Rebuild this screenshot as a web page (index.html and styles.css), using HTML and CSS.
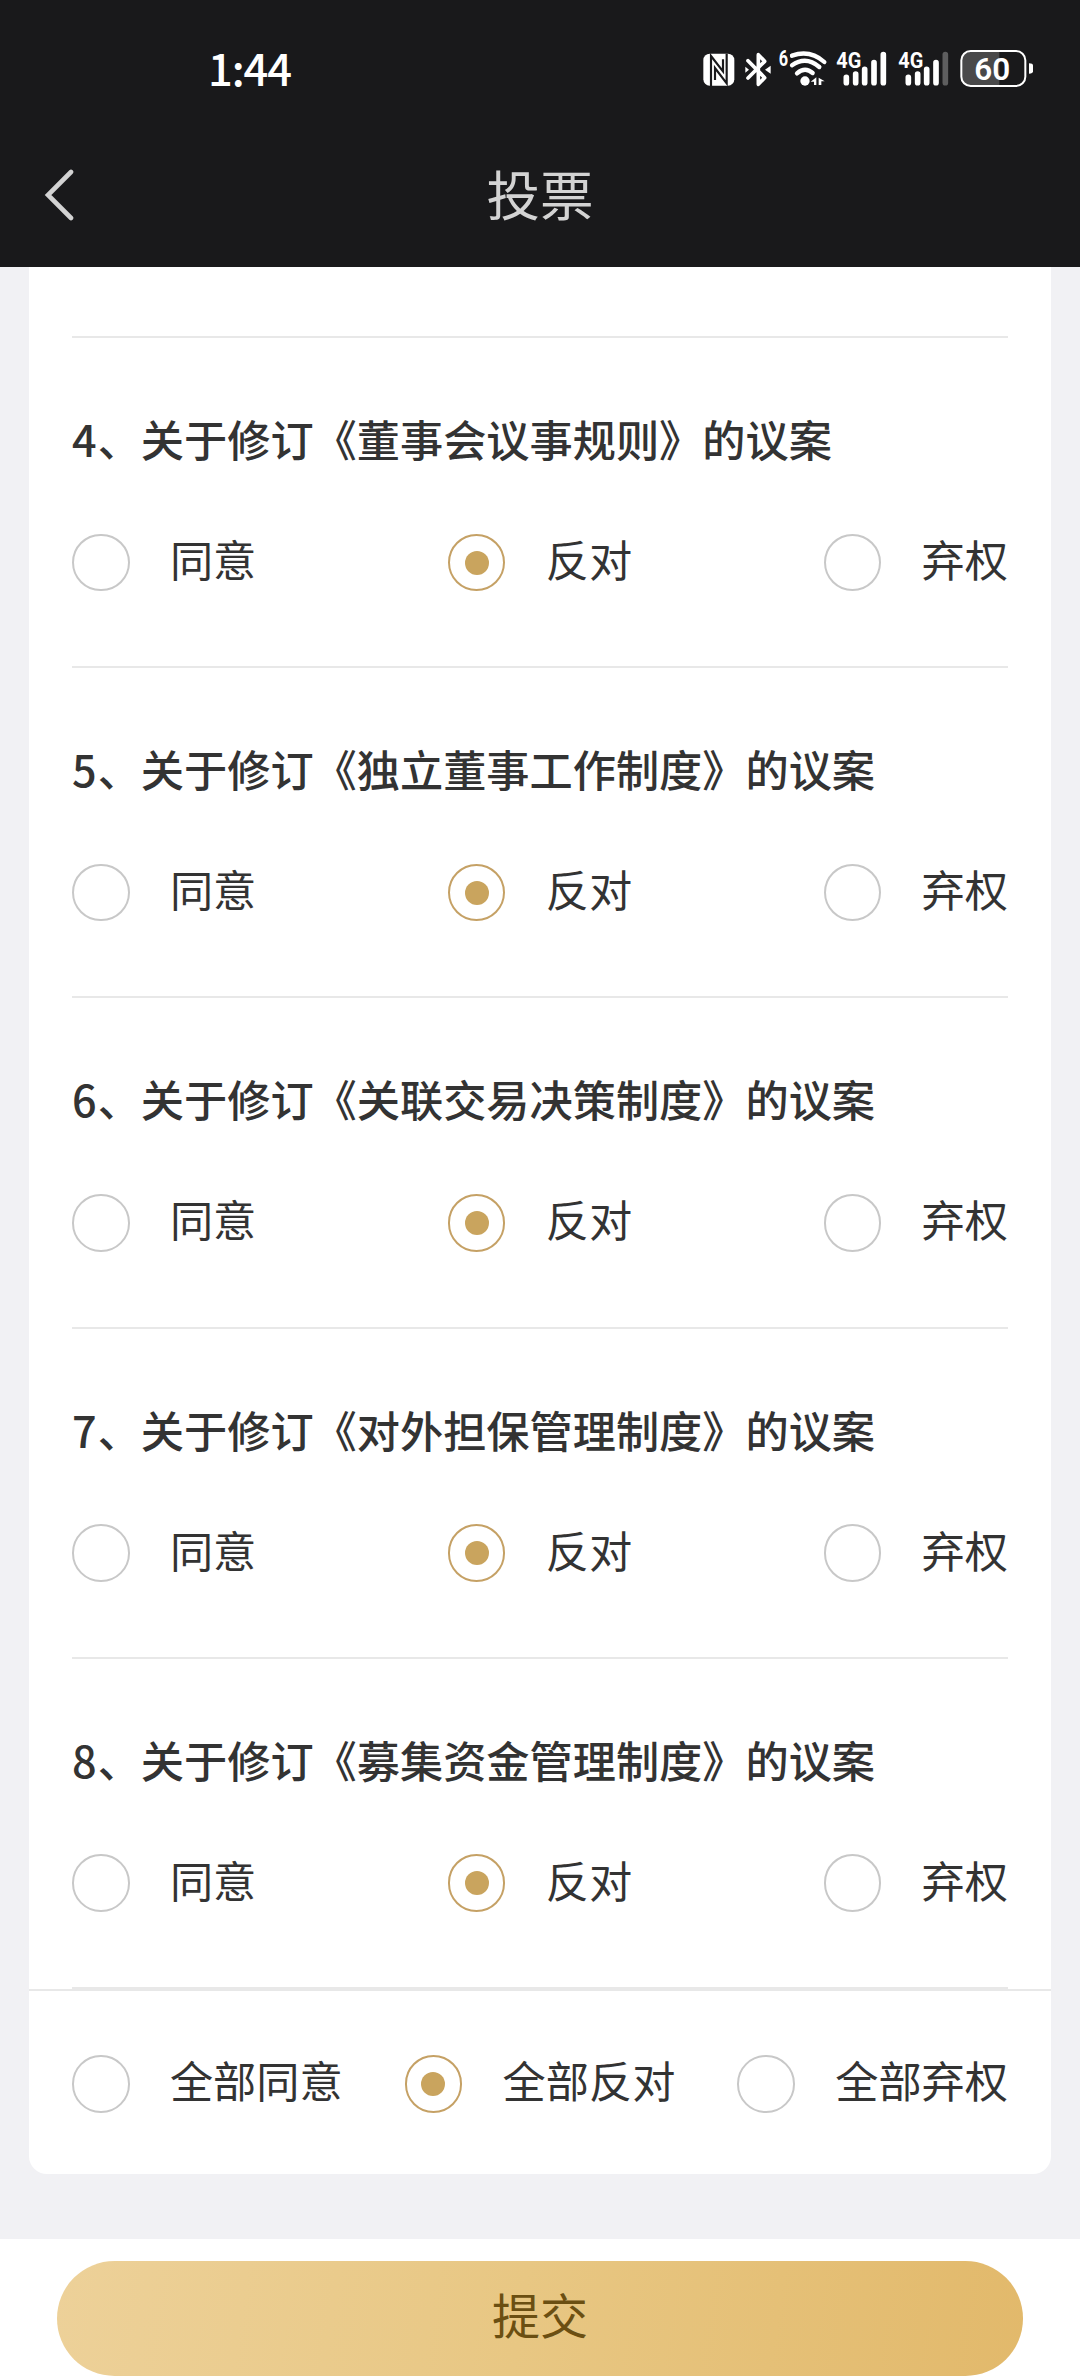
FILE: index.html
```html
<!DOCTYPE html>
<html lang="zh-CN">
<head>
<meta charset="utf-8">
<title>投票</title>
<link rel="stylesheet" href="styles.css">
</head>
<body>
<header class="header">
  <div class="status">
    <span class="clock">1:44</span>
    <div class="indicators">
      <svg class="ind" width="32" height="50" viewBox="38 30 96 150">
        <rect x="39" y="71" width="93" height="96" rx="19" fill="#fff"/>
        <path d="M62 168V78L98 124V88M74 150V114L109 160V71" fill="none" stroke="#19191b" stroke-width="6.5"/>
      </svg>
      <svg class="ind ind-bt" width="26" height="50" viewBox="164 30 78 150">
        <path d="M173 92L223 143L204 163V74L223 94L173 144" fill="none" stroke="#fff" stroke-width="11" stroke-linejoin="round" stroke-linecap="round"/>
        <path d="M224 119L241 107V131ZM165 110L176 119L165 128Z" fill="#fff"/>
      </svg>
      <svg class="ind ind-wifi" width="50" height="50" viewBox="262 30 150 150">
        <text class="tiny" x="264" y="108" textLength="28" lengthAdjust="spacingAndGlyphs" font-size="64">6</text>
        <g fill="none" stroke="#fff" stroke-width="13" stroke-linecap="round">
          <path d="M304 77Q358 58 401 96"/><path d="M304 106Q346 76 386 111"/><path d="M319 130Q343 109 366 129"/>
        </g>
        <circle cx="343" cy="153" r="14" fill="#fff"/>
        <path d="M360 155L377 142V165H370V155ZM384 143L402 154H392V165H384Z" fill="#fff"/>
      </svg>
      <svg class="ind ind-sig" width="51" height="50" viewBox="437 30 153 150">
        <text class="tiny" x="438" y="113" textLength="75" lengthAdjust="spacingAndGlyphs" font-size="64">4G</text>
        <path d="M468 142V158M496 132V158M523 118V158M551 98V158M579 74V158" stroke="#fff" stroke-width="17" stroke-linecap="round"/>
      </svg>
      <svg class="ind ind-sig2" width="51" height="50" viewBox="437 30 153 150">
        <text class="tiny" x="438" y="113" textLength="75" lengthAdjust="spacingAndGlyphs" font-size="64">4G</text>
        <path d="M468 142V158M496 132V158M523 118V158M551 98V158" stroke="#fff" stroke-width="17" stroke-linecap="round"/>
        <path d="M579 74V158" stroke="#5e5e5f" stroke-width="17" stroke-linecap="round"/>
      </svg>
      <svg class="ind ind-bat" width="74" height="50" viewBox="809 30 222 150">
        <path d="M927 65H841Q814 65 814 92V139Q814 166 841 166H927Z" fill="#49494a"/>
        <rect x="813" y="63" width="192" height="105" rx="28" fill="none" stroke="#fff" stroke-width="6"/>
        <path d="M1016 100Q1028 100 1028 107V124Q1028 131 1016 131Z" fill="#fff"/>
        <text class="level" x="906" y="150" text-anchor="middle" textLength="108" lengthAdjust="spacingAndGlyphs" font-size="96">60</text>
      </svg>
    </div>
  </div>
  <div class="navbar">
    <svg class="back" width="30" height="54" viewBox="0 0 30 54"><path d="M27 4L4 27L27 50" fill="none" stroke="#d3d3d3" stroke-width="4.6" stroke-linecap="round"/></svg>
    <h1 class="page-title">投票</h1>
  </div>
</header>
<main class="content">
  <section class="card">
    <div class="previous"></div>
    <article class="item">
      <h2 class="subject"><span class="num">4</span>、关于修订《董事会议事规则》的议案</h2>
      <div class="options"><label class="option"><i class="radio"></i><span class="label">同意</span></label><label class="option"><i class="radio checked"></i><span class="label">反对</span></label><label class="option"><i class="radio"></i><span class="label">弃权</span></label></div>
    </article>
    <article class="item">
      <h2 class="subject"><span class="num">5</span>、关于修订《独立董事工作制度》的议案</h2>
      <div class="options"><label class="option"><i class="radio"></i><span class="label">同意</span></label><label class="option"><i class="radio checked"></i><span class="label">反对</span></label><label class="option"><i class="radio"></i><span class="label">弃权</span></label></div>
    </article>
    <article class="item">
      <h2 class="subject"><span class="num">6</span>、关于修订《关联交易决策制度》的议案</h2>
      <div class="options"><label class="option"><i class="radio"></i><span class="label">同意</span></label><label class="option"><i class="radio checked"></i><span class="label">反对</span></label><label class="option"><i class="radio"></i><span class="label">弃权</span></label></div>
    </article>
    <article class="item">
      <h2 class="subject"><span class="num">7</span>、关于修订《对外担保管理制度》的议案</h2>
      <div class="options"><label class="option"><i class="radio"></i><span class="label">同意</span></label><label class="option"><i class="radio checked"></i><span class="label">反对</span></label><label class="option"><i class="radio"></i><span class="label">弃权</span></label></div>
    </article>
    <article class="item">
      <h2 class="subject"><span class="num">8</span>、关于修订《募集资金管理制度》的议案</h2>
      <div class="options"><label class="option"><i class="radio"></i><span class="label">同意</span></label><label class="option"><i class="radio checked"></i><span class="label">反对</span></label><label class="option"><i class="radio"></i><span class="label">弃权</span></label></div>
    </article>
    <div class="all">
      <div class="options"><label class="option"><i class="radio"></i><span class="label">全部同意</span></label><label class="option"><i class="radio checked"></i><span class="label">全部反对</span></label><label class="option"><i class="radio"></i><span class="label">全部弃权</span></label></div>
    </div>
  </section>
</main>
<footer class="footer"><button class="submit">提交</button></footer>
</body>
</html>
```
FILE: styles.css
```css
* { box-sizing: border-box; }
body {
  margin: 0;
  height: 2376px;
  display: flex;
  flex-direction: column;
  overflow: hidden;
  background: #f1f1f4;
  color: #333;
  font-family: "Noto Sans CJK SC", sans-serif;
}
.header { height: 267px; background: #19191b; flex: none; }
.status {
  height: 125px;
  padding: 0 46px 0 208px;
  display: flex;
  justify-content: space-between;
}
.clock { padding-top: 36px; font-size: 43.5px; line-height: 64px; font-weight: 500; letter-spacing: -1.1px; color: #fff; }
.indicators { display: flex; padding-top: 40px; }
.ind { display: block; flex: none; }
.ind-bt { margin-left: 10px; }
.ind-wifi { margin-left: 7px; }
.ind-sig { margin-left: 8px; }
.ind-sig2 { margin-left: 11px; }
.ind-bat { margin-left: 11px; }
.tiny { fill: #fff; font-family: Roboto, sans-serif; font-weight: 700; }
.level { fill: #fff; font-family: Roboto, sans-serif; font-weight: 600; }
.navbar {
  height: 142px;
  padding: 0 44px;
  display: grid;
  grid-template-columns: 30px 1fr 30px;
  align-items: start;
}
.back { margin-top: 43px; }
.page-title {
  margin: 28px 0 0;
  font-size: 53.5px;
  line-height: 80px;
  font-weight: 400;
  color: #d3d3d3;
  text-align: center;
}
.content { height: 1972px; padding: 0 29px; flex: none; }
.card {
  height: 1907px;
  background: #fff;
  border-radius: 0 0 18px 18px;
}
.previous { height: 71px; margin: 0 43px; border-bottom: 2px solid #e8e8e8; }
.item {
  height: 330.2px;
  margin: 0 43px;
  padding-top: 67px;
  border-bottom: 2px solid #e8e8e8;
}
.subject { margin: 0; font-size: 43.2px; line-height: 66px; font-weight: 500; white-space: nowrap; }
.num { letter-spacing: 1px; }
.options { display: flex; justify-content: space-between; }
.item .options { margin-top: 62.5px; }
.option {
  display: flex;
  align-items: center;
  gap: 40.3px;
  height: 58px;
  font-size: 43.2px;
  line-height: 58px;
}
.label { padding-bottom: 9px; }
.radio {
  width: 57.6px;
  height: 57.6px;
  flex: none;
  border: 2px solid #c8c8c8;
  border-radius: 50%;
}
.checked {
  display: grid;
  place-items: center;
  border-color: #c5a165;
}
.checked::after {
  content: "";
  width: 24px;
  height: 24px;
  border-radius: 50%;
  background: #c9a45e;
}
.all { border-top: 2px solid #e8e8e8; padding: 64px 43px 0; }
.footer { height: 137px; padding: 22px 57px 0; background: #fff; flex: none; }
.submit {
  display: block;
  width: 966px;
  height: 115px;
  padding: 0 0 10px;
  border: 0;
  border-radius: 58px;
  background: linear-gradient(98deg, #edd199, #e8c783 48%, #e2b96b);
  color: #6b4f12;
  font: 400 48px/105px "Noto Sans CJK SC", sans-serif;
}
```
